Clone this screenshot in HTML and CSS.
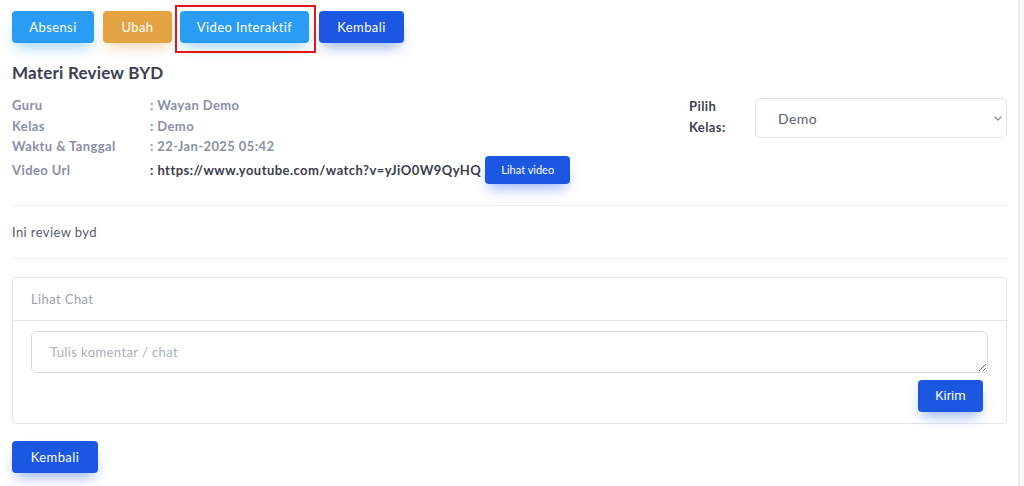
FILE: index.html
```html
<!DOCTYPE html>
<html>
<head>
<meta charset="utf-8">
<link rel="stylesheet" href="styles.css">
</head>
<body>
<div class="frame">
  <main class="page">
    <div class="toolbar">
      <button class="btn btn-sky btn-absensi">Absensi</button>
      <button class="btn btn-orange">Ubah</button>
      <div class="marked">
        <button class="btn btn-sky btn-wide">Video Interaktif</button>
        <span class="mark"></span>
      </div>
      <button class="btn btn-blue btn-top-back">Kembali</button>
    </div>

    <h1 class="title">Materi Review BYD</h1>

    <div class="info">
      <div class="meta">
        <div class="row"><span class="label">Guru</span><span class="value">: Wayan Demo</span></div>
        <div class="row"><span class="label">Kelas</span><span class="value">: Demo</span></div>
        <div class="row"><span class="label">Waktu &amp; Tanggal</span><span class="value">: 22-Jan-2025 05:42</span></div>
        <div class="row row-url"><span class="label">Video Url</span><span class="value url">: https://www.youtube.com/watch?v=yJiO0W9QyHQ</span><button class="btn btn-blue btn-small">Lihat video</button></div>
      </div>
      <div class="picker">
        <span class="picker-label">Pilih<br>Kelas:</span>
        <div class="select">
          <span>Demo</span>
          <svg width="8" height="5" viewBox="0 0 8 5"><path d="M1 1l3 3 3-3" fill="none" stroke="#8a8fa0" stroke-width="1.2" stroke-linecap="round" stroke-linejoin="round"/></svg>
        </div>
      </div>
    </div>

    <div class="desc">Ini review byd</div>

    <section class="card">
      <div class="card-head">Lihat Chat</div>
      <div class="card-body">
        <textarea class="chat" placeholder="Tulis komentar / chat"></textarea>
        <div class="send"><button class="btn btn-blue btn-kirim">Kirim</button></div>
      </div>
    </section>

    <button class="btn btn-blue btn-back">Kembali</button>
  </main>
  <div class="scroll"></div>
</div>
</body>
</html>
```
FILE: styles.css
```css
* { box-sizing: border-box; }
html, body { margin: 0; background: #fff; }
body {
  font-family: "Lato", "Noto Sans", sans-serif;
  font-size: 13px;
  letter-spacing: 0.4px;
  color: #3d4052;
  height: 486px;
  overflow: hidden;
}
.frame { display: flex; height: 486px; }
.page { flex: 1; padding: 11px 11px 0 12px; }
.scroll { width: 6px; background: #f6f6f7; border-left: 2px solid #ececee; }

.btn {
  font-family: "Lato", "Noto Sans", sans-serif;
  font-size: 13px;
  letter-spacing: 0.4px;
  border: 0;
  border-radius: 4px;
  height: 32px;
  padding: 0;
  color: #fff;
  cursor: pointer;
  flex-shrink: 0;
  white-space: nowrap;
}
.btn-sky { background: #2a9cf3; box-shadow: 0 8px 14px -4px rgba(42,156,243,0.45); }
.btn-orange { background: #e3a342; box-shadow: 0 8px 14px -4px rgba(227,163,66,0.45); }
.btn-blue { background: #1c57e2; box-shadow: 0 8px 14px -4px rgba(28,87,226,0.45); }

.toolbar { display: flex; align-items: center; gap: 9px; }
.btn-absensi { width: 82px; }
.btn-orange { width: 69px; }
.btn-wide { width: 129px; }
.btn-top-back { width: 85px; margin-left: 1px; }
.marked { position: relative; display: flex; flex-shrink: 0; margin-left: -1px; }
.mark {
  position: absolute;
  left: -5px; top: -6px; right: -7px; bottom: -10px;
  border: 2px solid #e3151c;
  pointer-events: none;
}

.title { font-size: 17px; font-weight: 700; line-height: 24px; margin: 18px 0 10px; color: #3d4052; letter-spacing: 0.2px; }

.info { display: flex; justify-content: space-between; }
.meta { display: flex; flex-direction: column; }
.row { display: flex; align-items: center; height: 20.5px; }
.row-url { height: 28px; margin-top: -1px; }
.label { width: 138px; color: #8a8fa8; font-weight: 700; flex-shrink: 0; }
.value { color: #8a8fa8; font-weight: 700; white-space: nowrap; }
.url { color: #3a3d4c; letter-spacing: 0.45px; }
.btn-small { height: 28px; width: 85px; font-size: 11px; margin-left: 4px; letter-spacing: 0; }

.picker { display: flex; align-items: flex-start; margin-top: 3px; }
.picker-label { width: 66px; font-weight: 700; color: #3d4052; line-height: 21px; margin-top: -2px; }
.select {
  width: 252px; height: 40px;
  border: 1px solid #dde1ea; border-radius: 6px;
  display: flex; align-items: center; justify-content: space-between;
  padding: 0 4px 0 22px;
  color: #5a5e70; font-size: 14px;
}

.desc {
  margin-top: 21px;
  border-top: 1px solid #eef0f4;
  border-bottom: 1px solid #eef0f4;
  padding: 16px 0;
  line-height: 20px;
  color: #555a68;
}

.card { margin-top: 18px; border: 1px solid #e1e5ec; border-radius: 4px; }
.card-head { height: 43px; line-height: 42px; padding: 0 18px; color: #9a9fb3; border-bottom: 1px solid #e1e5ec; }
.card-body { padding: 10px 18px 11px; }
.chat {
  display: block; width: 100%; height: 42px;
  border: 1px solid #d6dae3; border-radius: 6px;
  padding: 12px 18px; resize: vertical;
  font-family: "Lato", "Noto Sans", sans-serif; font-size: 13px; letter-spacing: 0.4px;
}
.chat::placeholder { color: #a9aebd; }
.send { display: flex; justify-content: flex-end; margin-top: 7px; padding-right: 5px; }
.btn-kirim { width: 65px; font-family: "Roboto", sans-serif; letter-spacing: 0; }

.btn-back { margin-top: 17px; width: 86px; }
```
